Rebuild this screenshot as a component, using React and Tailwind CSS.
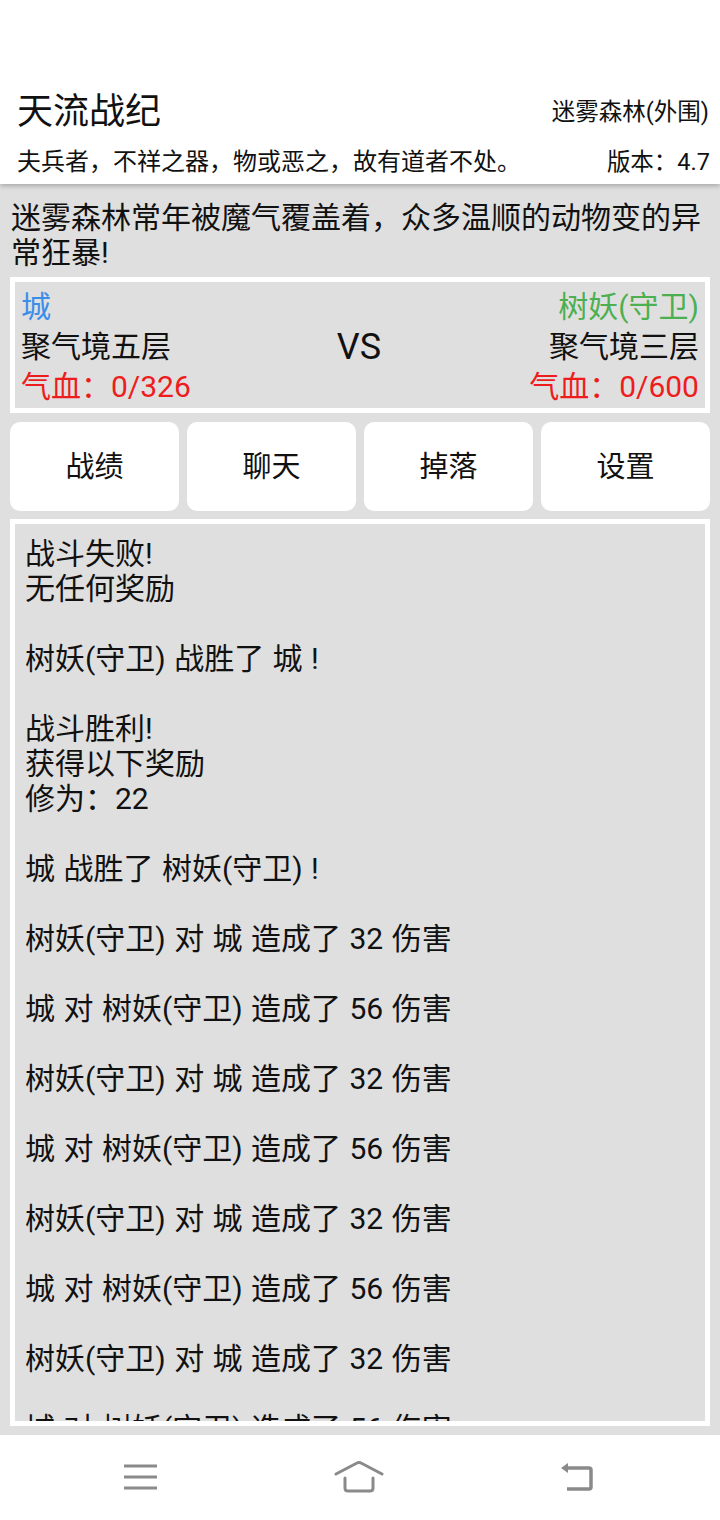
const logLines = [
  '战斗失败!',
  '无任何奖励',
  '',
  '树妖(守卫) 战胜了 城 !',
  '',
  '战斗胜利!',
  '获得以下奖励',
  '修为：22',
  '',
  '城 战胜了 树妖(守卫) !',
  '',
  '树妖(守卫) 对 城 造成了 32 伤害',
  '',
  '城 对 树妖(守卫) 造成了 56 伤害',
  '',
  '树妖(守卫) 对 城 造成了 32 伤害',
  '',
  '城 对 树妖(守卫) 造成了 56 伤害',
  '',
  '树妖(守卫) 对 城 造成了 32 伤害',
  '',
  '城 对 树妖(守卫) 造成了 56 伤害',
  '',
  '树妖(守卫) 对 城 造成了 32 伤害',
  '',
  '城 对 树妖(守卫) 造成了 56 伤害',
  '',
]

const tabs = ['战绩', '聊天', '掉落', '设置']

const App = () => {
  return (
    <div className="h-[1520px] w-[720px] flex flex-col bg-[#dfdfdf] text-[#111] font-['Roboto','Noto_Sans_CJK_SC',sans-serif]">
      {/* Header */}
      <div className="relative z-10 h-[184px] shrink-0 bg-white px-[17px] pt-[92px] shadow-[0_2px_5px_rgba(0,0,0,0.25)]">
        <div className="flex items-center justify-between h-[40px]">
          <span className="text-[36px] leading-[40px]">天流战纪</span>
          <span className="text-[23.5px] leading-[40px] -mr-[6px]">迷雾森林(外围)</span>
        </div>
        <div className="flex items-center justify-between h-[36px] mt-[12px]">
          <span className="text-[24px] leading-[36px]">夫兵者，不祥之器，物或恶之，故有道者不处。</span>
          <span className="text-[23.5px] leading-[36px] -mr-[7px]">版本：4.7</span>
        </div>
      </div>

      {/* Body */}
      <div className="flex-1 flex flex-col px-[10px] pt-[16px] pb-[9px] min-h-0">
        <p className="text-[30px] leading-[35px] pl-[1px]">
          迷雾森林常年被魔气覆盖着，众多温顺的动物变的异常狂暴!
        </p>

        {/* Battle box */}
        <div className="mt-[7px] border-[5px] border-white bg-[#dfdfdf] px-[6px] pt-[5px] pb-[1px] flex items-center justify-between">
          <div className="flex flex-col text-[30px] leading-[40px]">
            <span className="text-[#3a8ee8]">城</span>
            <span>聚气境五层</span>
            <span className="text-[#ee1c1c]">气血：0/326</span>
          </div>
          <span className="text-[36px] leading-[40px] pr-[2px]">VS</span>
          <div className="flex flex-col items-end text-[30px] leading-[40px]">
            <span className="text-[#4caf50]">树妖(守卫)</span>
            <span>聚气境三层</span>
            <span className="text-[#ee1c1c]">气血：0/600</span>
          </div>
        </div>

        {/* Tabs */}
        <div className="grid grid-cols-4 gap-[8px] mt-[9px]">
          {tabs.map((t) => (
            <button key={t} className="h-[89px] rounded-[10px] bg-white text-[29px] text-[#111] pt-[3px]">
              {t}
            </button>
          ))}
        </div>

        {/* Battle log */}
        <div className="mt-[8px] flex-1 min-h-0 border-[5px] border-white bg-[#dfdfdf] overflow-hidden">
          <div className="pl-[10px] pt-[12px] text-[30px] leading-[35px] [word-spacing:1px]">
            {logLines.map((line, i) => (
              <div key={i} className="h-[35px] whitespace-pre">{line}</div>
            ))}
          </div>
        </div>
      </div>

      {/* Bottom nav */}
      <div className="h-[85px] shrink-0 bg-white flex items-center justify-between pl-[122px] pr-[125px] pb-[2px]">
        <svg width="36" height="28" viewBox="0 0 36 28" fill="none" stroke="#8a8a8a" strokeWidth="3">
          <path d="M2 3 H35 M2 14 H35 M2 25 H35" />
        </svg>
        <svg width="52" height="32" viewBox="0 0 52 32" fill="none" stroke="#8a8a8a" strokeWidth="3" strokeLinejoin="round" strokeLinecap="round">
          <path d="M3 13 L24 2 Q26 1 28 2 L49 13" />
          <path d="M12 17 V27 Q12 30 15 30 H37 Q40 30 40 27 V17" />
        </svg>
        <svg width="36" height="30" viewBox="0 0 36 30" fill="none" stroke="#8a8a8a" strokeWidth="3.5">
          <path d="M5 6 H30 Q32 6 32 8 V25 Q32 27 30 27 H8" />
          <path d="M2 6 L9 1 L9 11 Z" fill="#8a8a8a" stroke="none" />
        </svg>
      </div>
    </div>
  )
}

export default App
